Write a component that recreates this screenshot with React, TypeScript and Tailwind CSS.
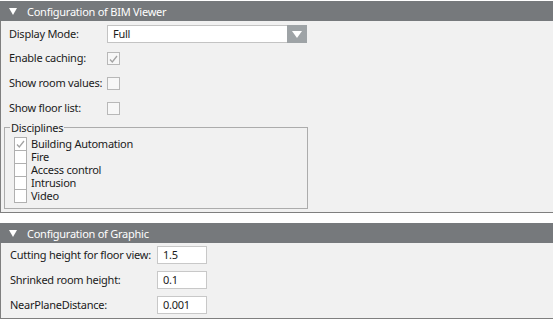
import React from "react";

const font = "font-['Noto_Sans','Open_Sans',sans-serif]";

function HeaderBar({ title }: { title: string }) {
  return (
    <div className="h-[20px] bg-[#76797c] flex items-center text-white text-[11px] leading-none whitespace-nowrap">
      <svg width="8" height="7" viewBox="0 0 8 7" className="ml-[9px] mt-px">
        <polygon points="0,0 8,0 4,7" fill="#ffffff" />
      </svg>
      <span className="ml-[10px]">{title}</span>
    </div>
  );
}

function Check({ checked = false }: { checked?: boolean }) {
  return (
    <div className="w-[13px] h-[13px] box-border border border-[#b8b8b8] bg-[#f7f7f7] flex items-center justify-center">
      {checked && (
        <svg width="9" height="8" viewBox="0 0 9 8">
          <polyline points="1,4.5 3.3,7 8,1" fill="none" stroke="#a3a3a3" strokeWidth="1.3" />
        </svg>
      )}
    </div>
  );
}

function GroupCheck({ checked = false, label }: { checked?: boolean; label: string }) {
  return (
    <div className="h-[13px] flex items-start">
      <div className="w-[13px] h-[14px] box-border border border-[#b0b0b0] bg-white flex items-center justify-center shrink-0">
        {checked && (
          <svg width="9" height="8" viewBox="0 0 9 8">
            <polyline points="1,4.5 3.3,7 8,1" fill="none" stroke="#a3a3a3" strokeWidth="1.3" />
          </svg>
        )}
      </div>
      <span className="ml-[4px] leading-[13px]">{label}</span>
    </div>
  );
}

function NumField({ label, value }: { label: string; value: string }) {
  return (
    <div className="flex items-center h-[18px]">
      <span className="w-[156px] pl-[9px]">{label}</span>
      <div className="w-[50px] h-[18px] box-border border border-[#c8c8c8] bg-white pl-[5px] flex items-center">
        {value}
      </div>
    </div>
  );
}

export default function App() {
  return (
    <div className={`w-[553px] h-[322px] bg-white text-[11px] tracking-[-0.25px] text-[#1b1b1b] whitespace-nowrap ${font}`}>
      <div className="pt-px">
        <HeaderBar title="Configuration of BIM Viewer" />
        <div className="h-[192px] bg-[#f1f1f1] border-l border-b border-[#7f7f7f] box-border flex flex-col">
          <div className="mt-[4px] flex items-center h-[18px]">
            <span className="w-[106px] pl-[8px]">Display Mode:</span>
            <div className="w-[200px] h-[18px] box-border border border-[#c3c3c3] bg-white flex items-center">
              <span className="pl-[5px] flex-1">Full</span>
              <div className="w-[20px] h-[18px] -mr-px bg-[#9ea3a6] flex items-center justify-center">
                <svg width="10" height="7" viewBox="0 0 10 7">
                  <polygon points="0,0 10,0 5,7" fill="#ffffff" />
                </svg>
              </div>
            </div>
          </div>
          <div className="mt-[9px] flex items-center h-[13px]">
            <span className="w-[106px] pl-[8px]">Enable caching:</span>
            <Check checked />
          </div>
          <div className="mt-[12px] flex items-center h-[13px]">
            <span className="w-[106px] pl-[8px]">Show room values:</span>
            <Check />
          </div>
          <div className="mt-[12px] flex items-center h-[13px]">
            <span className="w-[106px] pl-[8px]">Show floor list:</span>
            <Check />
          </div>
          <fieldset className="mt-[5px] ml-[3px] w-[304px] border border-[#acacac] pb-[6px]">
            <legend className="ml-[5px] px-px leading-[15px]">Disciplines</legend>
            <div className="mt-[2px] pl-[9px] flex flex-col">
              <GroupCheck checked label="Building Automation" />
              <GroupCheck label="Fire" />
              <GroupCheck label="Access control" />
              <GroupCheck label="Intrusion" />
              <GroupCheck label="Video" />
            </div>
          </fieldset>
        </div>
      </div>
      <div className="mt-[10px]">
        <HeaderBar title="Configuration of Graphic" />
        <div className="h-[76px] bg-[#f1f1f1] border-l border-b border-[#7f7f7f] box-border flex flex-col pt-[3px] gap-[7px]">
          <NumField label="Cutting height for floor view:" value="1.5" />
          <NumField label="Shrinked room height:" value="0.1" />
          <NumField label="NearPlaneDistance:" value="0.001" />
        </div>
      </div>
    </div>
  );
}
